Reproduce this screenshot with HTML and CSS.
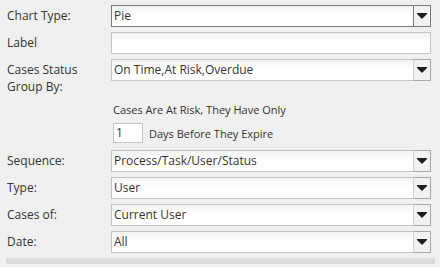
FILE: index.html
```html
<!DOCTYPE html>
<html lang="en">
<head>
    <meta charset="UTF-8">
    <title>Chart Settings</title>
    <link rel="stylesheet" href="styles.css">
</head>
<body>
    <div class="form">
        <div class="row">
            <label class="label">Chart Type:</label>
            <div class="select focused">
                <span class="value">Pie</span>
                <span class="btn"><svg width="10" height="6" viewBox="0 0 10 6"><path d="M0 0H10V1L5 6L0 1Z"/></svg></span>
            </div>
        </div>
        <div class="row">
            <label class="label">Label</label>
            <div class="text-input"></div>
        </div>
        <div class="row row-tall">
            <label class="label label-wrap">Cases Status<br>Group By:</label>
            <div class="select">
                <span class="value">On Time,At Risk,Overdue</span>
                <span class="btn"><svg width="10" height="6" viewBox="0 0 10 6"><path d="M0 0H10V1L5 6L0 1Z"/></svg></span>
            </div>
        </div>
        <div class="risk">
            <div class="risk-text">Cases Are At Risk, They Have Only</div>
            <div class="risk-days">
                <div class="num-input">1</div>
                <span>Days Before They Expire</span>
            </div>
        </div>
        <div class="row">
            <label class="label">Sequence:</label>
            <div class="select">
                <span class="value">Process/Task/User/Status</span>
                <span class="btn"><svg width="10" height="6" viewBox="0 0 10 6"><path d="M0 0H10V1L5 6L0 1Z"/></svg></span>
            </div>
        </div>
        <div class="row">
            <label class="label">Type:</label>
            <div class="select">
                <span class="value">User</span>
                <span class="btn"><svg width="10" height="6" viewBox="0 0 10 6"><path d="M0 0H10V1L5 6L0 1Z"/></svg></span>
            </div>
        </div>
        <div class="row">
            <label class="label">Cases of:</label>
            <div class="select">
                <span class="value">Current User</span>
                <span class="btn"><svg width="10" height="6" viewBox="0 0 10 6"><path d="M0 0H10V1L5 6L0 1Z"/></svg></span>
            </div>
        </div>
        <div class="row">
            <label class="label">Date:</label>
            <div class="select">
                <span class="value">All</span>
                <span class="btn"><svg width="10" height="6" viewBox="0 0 10 6"><path d="M0 0H10V1L5 6L0 1Z"/></svg></span>
            </div>
        </div>
    </div>
    <div class="bar"></div>
</body>
</html>
```

FILE: styles.css
```css
* {
    margin: 0;
    padding: 0;
    box-sizing: border-box;
}

body {
    background: #f0f0f0;
    font-family: 'Open Sans', sans-serif;
    font-size: 12px;
    color: #333333;
    overflow: hidden;
}

.form {
    padding: 5px 0 0 7px;
}

.row {
    display: grid;
    grid-template-columns: 104px 320px;
    height: 22px;
    margin-bottom: 5px;
}

.row-tall {
    height: 43px;
    margin-bottom: 0;
}

.label {
    line-height: 22px;
}

.label-wrap {
    line-height: 17px;
    padding-top: 2px;
}

.select,
.text-input {
    display: flex;
    align-items: stretch;
    height: 22px;
    background: linear-gradient(#f3f3f3, #ffffff 45%);
    border: 1px solid #c4c4c4;
}

.select.focused {
    border-color: #7a7a7a;
}

.value {
    flex: 1;
    line-height: 20px;
    padding-left: 2px;
}

.btn {
    width: 18px;
    margin: -1px -1px -1px 0;
    display: flex;
    align-items: center;
    justify-content: center;
    border: 1px solid #a8a8a8;
    border-left-color: #d0d0d0;
    background: #f2f2f2;
}

.focused .btn {
    border-color: #7a7a7a;
}

.btn svg {
    fill: #1e1e1e;
}

.risk {
    padding-left: 106px;
    font-size: 11px;
    margin-bottom: 7px;
}

.risk-text {
    line-height: 15px;
    margin-bottom: 6px;
}

.risk-days {
    display: flex;
    align-items: center;
    gap: 6px;
}

.num-input {
    width: 30px;
    height: 20px;
    line-height: 18px;
    padding-left: 2px;
    font-size: 12px;
    background: #ffffff;
    border: 1px solid #c4c4c4;
}

.bar {
    margin-left: 6px;
    width: 429px;
    height: 6px;
    background: #dcdcdc;
}
```
